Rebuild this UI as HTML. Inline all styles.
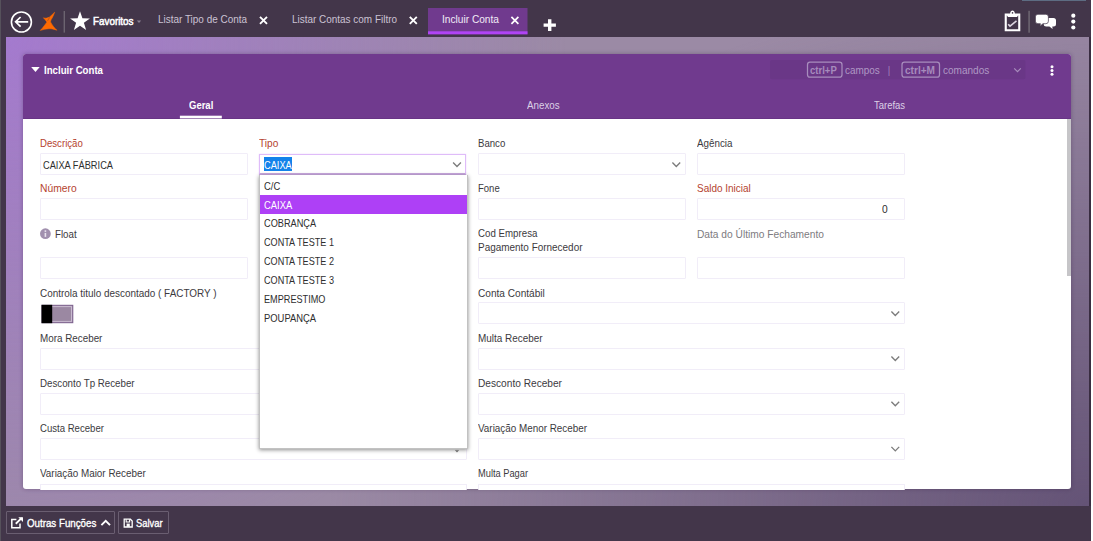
<!DOCTYPE html>
<html>
<head>
<meta charset="utf-8">
<title>Incluir Conta</title>
<style>
*{box-sizing:border-box;margin:0;padding:0}
html,body{width:1093px;height:541px;overflow:hidden}
body{position:relative;background:#43364a;font-family:"Liberation Sans",sans-serif;font-size:11px;color:#333}
.a{position:absolute}
.t{position:absolute;white-space:nowrap;line-height:14px;transform-origin:0 0}
#grad{left:5.8px;top:36.9px;width:1082.9px;height:469.1px;background:radial-gradient(560px 560px at 0 0,rgba(164,122,206,1) 0%,rgba(164,122,206,0) 100%),radial-gradient(760px 520px at 100% 100%,rgba(100,83,118,1) 0%,rgba(100,83,118,0) 100%),#9b8aa5}
#ledge{left:0;top:0;width:0.8px;height:541px;background:#56515b}
#redge{left:1088.7px;top:36.9px;width:2.1px;height:469.1px;background:#392d41}
#wedge{left:1090.8px;top:0;width:2.2px;height:541px;background:#fff}
#panel{left:23px;top:54px;width:1048px;height:435px;background:#fff;border-radius:3px;box-shadow:0 0 4px rgba(40,20,60,.32);overflow:hidden}
#phead{left:0;top:0;width:1048px;height:65px;background:#703a8e}
.inp{position:absolute;height:22px;border:1px solid #f1edf8;background:#fff;border-radius:1px}
.w1{width:207.5px}
.w2{width:426.5px}
svg{position:absolute;overflow:visible}
.btn{position:absolute;top:511px;height:22.8px;border:1px solid #6a5e71;border-radius:1px}
</style>
</head>
<body>
<div id="ledge" class="a"></div>
<div id="grad" class="a"></div>
<div id="redge" class="a"></div>
<div id="wedge" class="a"></div>
<div class="a" style="left:1022px;top:0;width:64px;height:1px;background:#5d6c82"></div>

<!-- TOPBAR ICONS -->
<svg class="a" style="left:0;top:0" width="1093" height="37" viewBox="0 0 1093 37">
  <!-- back -->
  <circle cx="21.4" cy="22" r="10" fill="none" stroke="#fff" stroke-width="1.6"/>
  <path d="M28.2 21.8H15.8M20.6 17L15.6 21.8L20.6 26.6" fill="none" stroke="#fff" stroke-width="1.7" stroke-linecap="butt" stroke-linejoin="miter"/>
  <!-- logo -->
  <path d="M54.7 12.2C54.1 13.8 53.5 15.2 52.9 16.6C52.3 17.8 51.7 18.8 51.2 19.6C50.9 20.4 50.6 21.2 50.5 21.9C51.3 23.4 52.2 24.8 53.2 26.2C54.3 27.6 55.5 28.9 56.9 30.2C54 29.2 51.3 28.6 49 28.7C46.2 28.8 43.3 29.5 40.3 30.4C41.7 28.9 42.9 27.5 44 26C45.1 24.6 46.1 23.3 47 22C46.4 21.5 45.9 20.9 45.5 20.2C44.9 19.5 44.2 18.8 43.4 17.8C44.5 18.2 45.6 18.3 46.7 18.1C47.7 17.9 48.6 17.6 49.4 17.1C50 16.7 50.5 16.2 51 15.7C52.3 14.6 53.5 13.4 54.7 12.2Z" fill="#ff6a00" stroke="#ff6a00" stroke-width="0.5" stroke-linejoin="round"/>
  <path d="M49.7 17.3L47.5 20.9" stroke="#43364a" stroke-width="0.55" opacity="0.6"/>
  <!-- separator -->
  <rect x="63.6" y="11" width="1.4" height="21.6" fill="#6c6470"/>
  <!-- star -->
  <path id="star" d="M80.00 11.20L82.41 18.28L89.89 18.39L83.90 22.87L86.11 30.01L80.00 25.70L73.89 30.01L76.10 22.87L70.11 18.39L77.59 18.28Z" fill="#fff"/>
  <!-- fav caret -->
  <path d="M136.8 20.6h4.4l-2.2 2.4z" fill="#8a7f90"/>
  <!-- tab closes -->
  <g stroke="#fff" stroke-width="1.9" fill="none">
    <path d="M260 16.8l7 7M267 16.8l-7 7"/>
    <path d="M409.8 16.8l7 7M416.8 16.8l-7 7"/>
  </g>
  <!-- active tab -->
  <rect x="428" y="8" width="99.5" height="26.3" fill="#703a8e"/>
  <rect x="428" y="31.3" width="99.5" height="3" fill="#b044f5"/>
  <path d="M511.4 16.8l7 7M518.4 16.8l-7 7" stroke="#fff" stroke-width="1.7" fill="none"/>
  <!-- plus -->
  <path d="M549.7 19.2v11.8M543.6 25.1h12.3" stroke="#fff" stroke-width="3.4" fill="none"/>
  <!-- clipboard -->
  <path d="M1004.7 13.6H1010.1C1010.3 11.6 1011.3 10.5 1012.5 10.5C1013.7 10.5 1014.7 11.6 1014.9 13.6H1020.3V31.3H1004.7Z" fill="#fff"/>
  <path d="M1006.8 15.2L1008 16.9H1017L1018.2 15.2V29.3H1006.8Z" fill="#43364a"/>
  <circle cx="1012.5" cy="12.9" r="0.8" fill="#43364a"/>
  <path d="M1008.2 24.2L1010 26.1L1016.5 20.9" fill="none" stroke="#ddd6e1" stroke-width="1.6"/>
  <rect x="1028.3" y="10.8" width="1.6" height="21.9" fill="#6c6470"/>
  <!-- chat -->
  <path d="M1046.2 17.9h7.3a2.5 2.5 0 0 1 2.5 2.5v3.5a2.5 2.5 0 0 1 -2.5 2.5h-1.2l.3 2.5-3.2-2.5h-3.2a2.5 2.5 0 0 1 -2.5-2.5v-3.5a2.5 2.5 0 0 1 2.5-2.5z" fill="#fff"/>
  <path d="M1037.9 14.3h8a2.5 2.5 0 0 1 2.5 2.5v4.4a2.5 2.5 0 0 1 -2.5 2.5h-2.9l-3.1 2.6 .5-2.6h-2.5a2.5 2.5 0 0 1 -2.5-2.5v-4.4a2.5 2.5 0 0 1 2.5-2.5z" fill="#fff" stroke="#43364a" stroke-width="0.7"/>
  <!-- dots -->
  <circle cx="1073.3" cy="15.7" r="2.1" fill="#fff"/>
  <circle cx="1073.3" cy="21.6" r="2.1" fill="#fff"/>
  <circle cx="1073.3" cy="27.5" r="2.1" fill="#fff"/>
</svg>

<!-- PANEL -->
<div id="panel" class="a">
  <div id="phead" class="a"></div>
  <div class="a" style="left:0;top:63.6px;width:1048px;height:1.4px;background:#683485"></div>
  <!-- scrollbar -->
  <div class="a" style="left:1043.8px;top:65px;width:4.2px;height:156.6px;background:#c6c5c8"></div>
</div>

<!-- panel header decorations (page coords) -->
<svg class="a" style="left:0;top:0" width="1093" height="130" viewBox="0 0 1093 130">
  <path d="M31.2 67.1h8.5l-4.25 5z" fill="#fff"/>
  <rect x="179.9" y="115.7" width="41.9" height="2.7" fill="#fff"/>
  <rect x="770" y="60" width="255.5" height="19.3" rx="2" fill="#6a3787"/>
  <rect x="807.5" y="62.2" width="34.5" height="15" rx="2.5" fill="none" stroke="#a88dbd" stroke-width="1.25"/>
  <rect x="902" y="62.2" width="37.5" height="15" rx="2.5" fill="none" stroke="#a88dbd" stroke-width="1.25"/>
  <path d="M1014.2 68.4l3.3 3.2l3.3-3.2" fill="none" stroke="#a88dbd" stroke-width="1.2"/>
  <circle cx="1052" cy="66.8" r="1.5" fill="#fff"/>
  <circle cx="1052" cy="70.5" r="1.5" fill="#fff"/>
  <circle cx="1052" cy="74.2" r="1.5" fill="#fff"/>
</svg>

<!-- INPUTS (page coords) -->
<div class="inp w1" style="left:40px;top:153px"></div>
<div class="inp w1" style="left:478px;top:153px"></div>
<div class="inp w1" style="left:697px;top:153px"></div>
<div class="inp w1" style="left:40px;top:198px"></div>
<div class="inp w1" style="left:478px;top:198px"></div>
<div class="inp w1" style="left:697px;top:198px"></div>
<div class="inp w1" style="left:40px;top:257px"></div>
<div class="inp w1" style="left:478px;top:257px"></div>
<div class="inp w1" style="left:697px;top:257px"></div>
<div class="inp w2" style="left:478px;top:302.2px"></div>
<div class="inp w2" style="left:40px;top:347.5px"></div>
<div class="inp w2" style="left:478px;top:347.5px"></div>
<div class="inp w2" style="left:40px;top:392.5px"></div>
<div class="inp w2" style="left:478px;top:392.5px"></div>
<div class="inp w2" style="left:40px;top:437.8px"></div>
<div class="inp w2" style="left:478px;top:437.8px"></div>
<div class="inp w2" style="left:40px;top:483.5px;height:6px;border-bottom:0"></div>
<div class="inp w2" style="left:478px;top:483.5px;height:6px;border-bottom:0"></div>

<!-- Tipo select (focused) -->
<div class="a" style="left:259.4px;top:153.6px;width:206.2px;height:21.3px;border:1.7px solid #dfbcf9;border-bottom:2.1px solid #caa9e0;background:#fff;box-shadow:0 0 1.5px #ead4fb"></div>
<div class="a" style="left:264.1px;top:157.2px;width:28.3px;height:13.9px;background:#1482ea"></div>

<!-- chevrons, info icon, toggle -->
<svg class="a" style="left:0;top:0" width="1093" height="500" viewBox="0 0 1093 500">
  <g fill="none" stroke="#7c7c7c" stroke-width="1.35">
    <path d="M453.1 162.5l3.9 4l3.9-4"/>
    <path d="M672.4 162.5l3.9 4l3.9-4"/>
    <path d="M891.4 311.5l3.9 4l3.9-4"/>
    <path d="M891.4 356.5l3.9 4l3.9-4"/>
    <path d="M891.4 401.7l3.9 4l3.9-4"/>
    <path d="M891.4 446.9l3.9 4l3.9-4"/>
    <path d="M455.6 450.2l1.4 1.4l1.4-1.4" stroke-width="1.2"/>
  </g>
  <!-- info -->
  <circle cx="45.4" cy="233.7" r="5.4" fill="#a190ae"/>
  <rect x="44.6" y="232.9" width="1.6" height="4" fill="#e9e3ee"/>
  <rect x="44.6" y="230.3" width="1.6" height="1.6" fill="#e9e3ee"/>
  <!-- toggle -->
  <rect x="42" y="305.3" width="30.8" height="17.4" fill="#9b88a2" stroke="#7b5f8c" stroke-width="1"/>
  <rect x="43.3" y="306.6" width="28.2" height="14.8" fill="none" stroke="#c9bbd0" stroke-width="1"/>
  <rect x="41.5" y="304.8" width="10.7" height="18.4" fill="#000"/>
</svg>

<!-- DROPDOWN -->
<div class="a" style="left:259px;top:175.1px;width:209px;height:274.1px;background:#fff;border:1px solid #c2c2c2;border-top:0;box-shadow:0 1px 4px rgba(0,0,0,.45)"></div>
<div class="a" style="left:260px;top:195px;width:207px;height:18.5px;background:#ae40f6"></div>

<span class="t" style="left:263.85px;top:158.32px;font-size:11.5px;color:#ffffff;transform:scaleX(0.8025)">CAIXA</span>
<span class="t" style="left:263.84px;top:179.42px;font-size:11.5px;color:#2e2e2e;transform:scaleX(0.8177)">C/C</span>
<span class="t" style="left:263.84px;top:197.82px;font-size:11.5px;color:#ffffff;transform:scaleX(0.8170)">CAIXA</span>
<span class="t" style="left:263.85px;top:216.22px;font-size:11.5px;color:#2e2e2e;transform:scaleX(0.7992)">COBRANÇA</span>
<span class="t" style="left:263.85px;top:235.02px;font-size:11.5px;color:#2e2e2e;transform:scaleX(0.7918)">CONTA TESTE 1</span>
<span class="t" style="left:263.85px;top:253.92px;font-size:11.5px;color:#2e2e2e;transform:scaleX(0.7918)">CONTA TESTE 2</span>
<span class="t" style="left:263.85px;top:272.72px;font-size:11.5px;color:#2e2e2e;transform:scaleX(0.7918)">CONTA TESTE 3</span>
<span class="t" style="left:263.85px;top:291.62px;font-size:11.5px;color:#2e2e2e;transform:scaleX(0.7942)">EMPRESTIMO</span>
<span class="t" style="left:263.84px;top:310.52px;font-size:11.5px;color:#2e2e2e;transform:scaleX(0.8179)">POUPANÇA</span>

<!-- BOTTOM BAR -->
<div class="btn" style="left:6px;width:109px"></div>
<div class="btn" style="left:118.2px;width:50.8px"></div>
<svg class="a" style="left:0;top:506px" width="200" height="35" viewBox="0 506 200 35">
  <!-- external link icon -->
  <g fill="none" stroke="#fff" stroke-width="1.5">
    <path d="M20 523.6V527.7H11.8V519.5H16.4"/>
    <path d="M15.8 523.8L21.8 517.9" stroke-width="1.9"/>
  </g>
  <path d="M18.3 517.2H23v4.7z" fill="#fff"/>
  <!-- caret up -->
  <path d="M101.4 525.2l4.3-4.3l4.3 4.3" fill="none" stroke="#fff" stroke-width="1.9"/>
  <!-- save icon -->
  <g fill="none" stroke="#fff" stroke-width="1.3">
    <path d="M124.2 519.2H130.4L132.2 521V527H124.2Z"/>
    <path d="M126.2 519.2V522H129.6V519.2" stroke-width="1.1"/>
    <rect x="126.6" y="523.6" width="3.2" height="3.2" fill="#fff" stroke="none"/>
  </g>
</svg>

<span class="t" style="left:93.11px;top:13.72px;font-size:11.5px;color:#ffffff;transform:scaleX(0.8563);-webkit-text-stroke:0.55px #fff">Favoritos</span>
<span class="t" style="left:158.30px;top:11.79px;font-size:11px;color:#cbc2d3;transform:scaleX(0.9040)">Listar Tipo de Conta</span>
<span class="t" style="left:291.70px;top:11.79px;font-size:11px;color:#cbc2d3;transform:scaleX(0.9040)">Listar Contas com Filtro</span>
<span class="t" style="left:441.99px;top:11.79px;font-size:11px;color:#f1eaf6;transform:scaleX(0.9228)">Incluir Conta</span>
<span class="t" style="left:44.02px;top:63.29px;font-size:11px;color:#ffffff;transform:scaleX(0.8775);font-weight:700">Incluir Conta</span>
<span class="t" style="left:188.93px;top:98.39px;font-size:11px;color:#ffffff;transform:scaleX(0.8635);font-weight:700">Geral</span>
<span class="t" style="left:526.81px;top:97.99px;font-size:11px;color:#dcd0e6;transform:scaleX(0.8882)">Anexos</span>
<span class="t" style="left:874.03px;top:98.19px;font-size:11px;color:#dcd0e6;transform:scaleX(0.8592)">Tarefas</span>
<span class="t" style="left:810.43px;top:63.06px;font-size:10.5px;color:#a68bbc;transform:scaleX(0.9090);font-weight:700">ctrl+P</span>
<span class="t" style="left:845.40px;top:62.89px;font-size:11px;color:#af98c4;transform:scaleX(0.9032)">campos</span>
<span class="t" style="left:888.14px;top:62.89px;font-size:11px;color:#af98c4;transform:scaleX(0.6995)">|</span>
<span class="t" style="left:904.89px;top:63.06px;font-size:10.5px;color:#a68bbc;transform:scaleX(0.9610);font-weight:700">ctrl+M</span>
<span class="t" style="left:943.30px;top:62.89px;font-size:11px;color:#af98c4;transform:scaleX(0.9120)">comandos</span>
<span class="t" style="left:39.72px;top:136.39px;font-size:11px;color:#b5432f;transform:scaleX(0.8751)">Descrição</span>
<span class="t" style="left:39.68px;top:181.39px;font-size:11px;color:#b5432f;transform:scaleX(0.9355)">Número</span>
<span class="t" style="left:54.52px;top:226.89px;font-size:11px;color:#3c3a3e;transform:scaleX(0.8828)">Float</span>
<span class="t" style="left:39.70px;top:286.19px;font-size:11px;color:#3c3a3e;transform:scaleX(0.9021)">Controla titulo descontado ( FACTORY )</span>
<span class="t" style="left:39.71px;top:330.79px;font-size:11px;color:#3c3a3e;transform:scaleX(0.8952)">Mora Receber</span>
<span class="t" style="left:39.72px;top:375.99px;font-size:11px;color:#3c3a3e;transform:scaleX(0.8857)">Desconto Tp Receber</span>
<span class="t" style="left:39.73px;top:421.19px;font-size:11px;color:#3c3a3e;transform:scaleX(0.8709)">Custa Receber</span>
<span class="t" style="left:39.71px;top:466.39px;font-size:11px;color:#3c3a3e;transform:scaleX(0.8973)">Variação Maior Receber</span>
<span class="t" style="left:258.89px;top:136.39px;font-size:11px;color:#b5432f;transform:scaleX(0.9190)">Tipo</span>
<span class="t" style="left:477.62px;top:136.39px;font-size:11px;color:#3c3a3e;transform:scaleX(0.8749)">Banco</span>
<span class="t" style="left:477.63px;top:181.39px;font-size:11px;color:#3c3a3e;transform:scaleX(0.8653)">Fone</span>
<span class="t" style="left:477.62px;top:226.39px;font-size:11px;color:#3c3a3e;transform:scaleX(0.8831)">Cod Empresa</span>
<span class="t" style="left:477.60px;top:240.19px;font-size:11px;color:#3c3a3e;transform:scaleX(0.9042)">Pagamento Fornecedor</span>
<span class="t" style="left:477.59px;top:285.99px;font-size:11px;color:#3c3a3e;transform:scaleX(0.9178)">Conta Contábil</span>
<span class="t" style="left:477.60px;top:330.89px;font-size:11px;color:#3c3a3e;transform:scaleX(0.9029)">Multa Receber</span>
<span class="t" style="left:477.59px;top:376.09px;font-size:11px;color:#3c3a3e;transform:scaleX(0.9220)">Desconto Receber</span>
<span class="t" style="left:477.61px;top:421.19px;font-size:11px;color:#3c3a3e;transform:scaleX(0.8974)">Variação Menor Receber</span>
<span class="t" style="left:477.64px;top:466.39px;font-size:11px;color:#3c3a3e;transform:scaleX(0.8430)">Multa Pagar</span>
<span class="t" style="left:696.71px;top:136.39px;font-size:11px;color:#3c3a3e;transform:scaleX(0.8927)">Agência</span>
<span class="t" style="left:696.70px;top:181.39px;font-size:11px;color:#b5432f;transform:scaleX(0.9051)">Saldo Inicial</span>
<span class="t" style="left:696.69px;top:226.69px;font-size:11px;color:#7d7b80;transform:scaleX(0.9266)">Data do Último Fechamento</span>
<span class="t" style="left:42.74px;top:158.02px;font-size:11.5px;color:#2e2e2e;transform:scaleX(0.8053)">CAIXA FÁBRICA</span>
<span class="t" style="left:881.69px;top:202.32px;font-size:11.5px;color:#2e2e2e;transform:scaleX(0.8898)">0</span>
<span class="t" style="left:26.52px;top:515.59px;font-size:11px;color:#ffffff;transform:scaleX(0.8854);-webkit-text-stroke:0.35px #fff">Outras Funções</span>
<span class="t" style="left:136.34px;top:515.59px;font-size:11px;color:#ffffff;transform:scaleX(0.8497);-webkit-text-stroke:0.35px #fff">Salvar</span>
</body>
</html>
